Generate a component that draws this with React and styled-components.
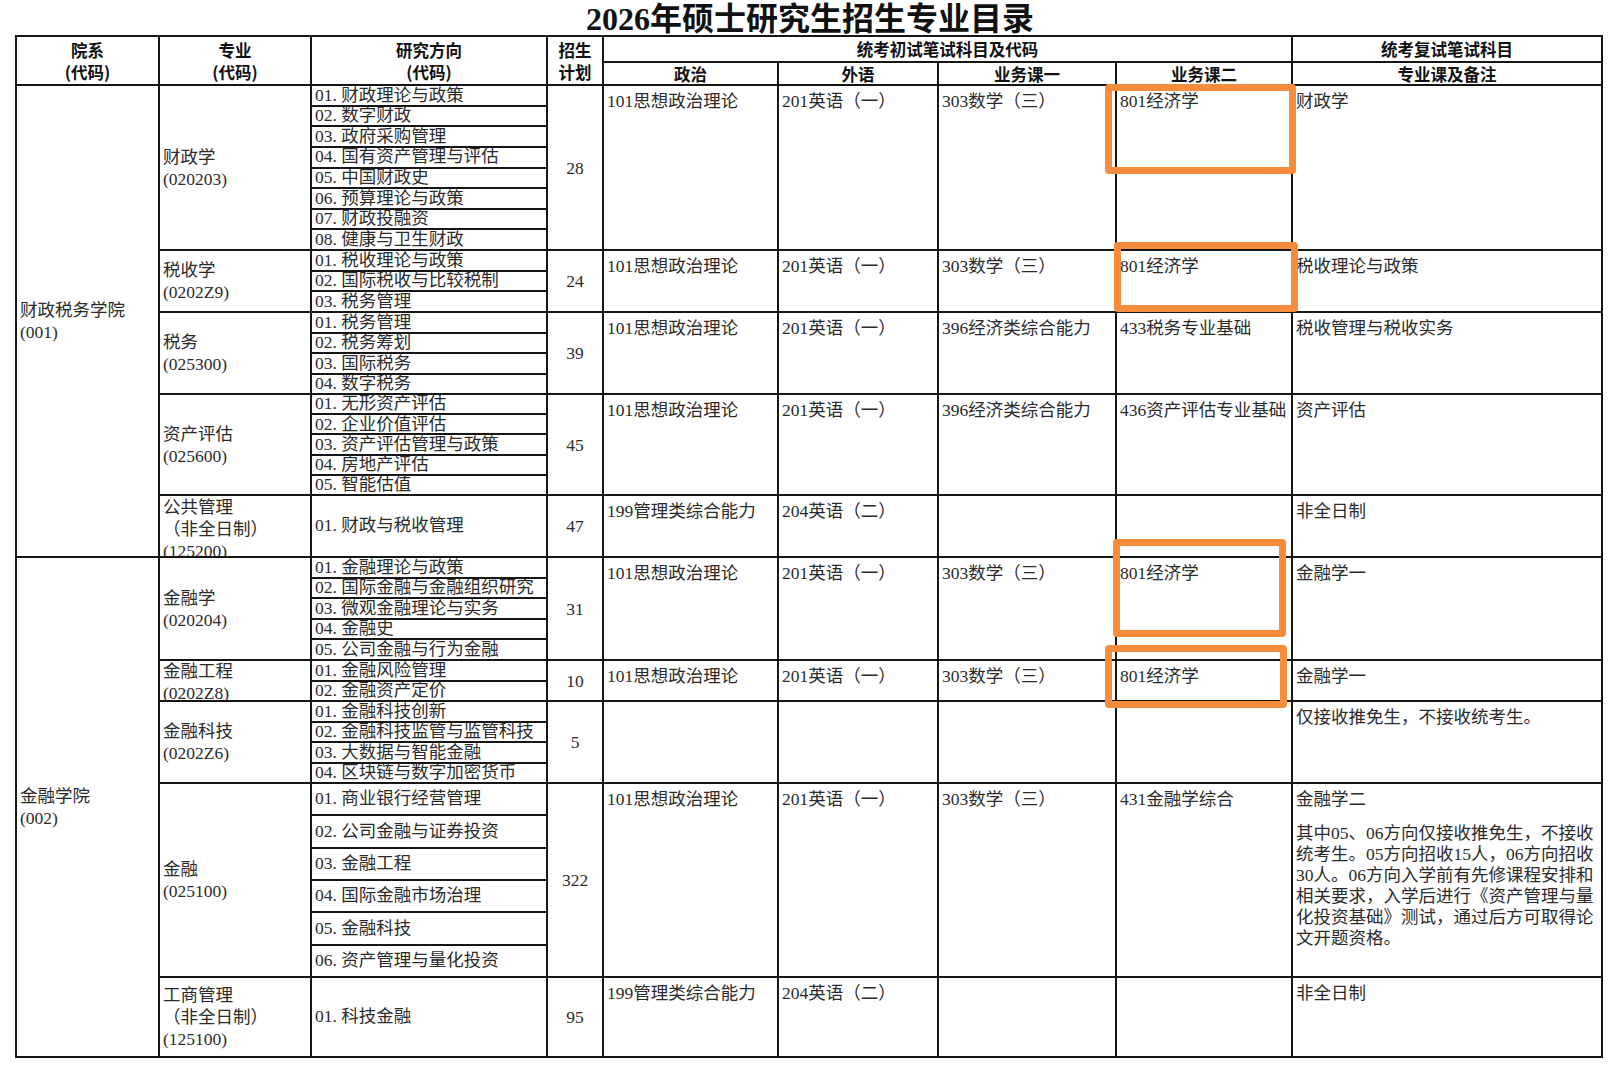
import React from "react";
import styled, { createGlobalStyle } from "styled-components";

const GlobalStyle = createGlobalStyle`
  html, body {
    margin: 0;
    padding: 0;
    background: #fff;
  }
  body {
    font-family: "Liberation Serif", "Noto Sans CJK SC", serif;
    color: #2b2b2b;
  }
`;

const COLS = [143, 152, 236, 56, 175, 160, 178, 176, 310];
const ROWS = [26, 23, 165, 62, 82, 101, 62, 103, 41, 82, 194, 80];
const LINE = "#161616";

const std = ["101思想政治理论", "201英语（一）", "303数学（三）", "801经济学"];

const departments = [
  {
    name: "财政税务学院",
    code: "(001)",
    majors: [
      {
        name: ["财政学", "(020203)"],
        dirs: [
          "01. 财政理论与政策",
          "02. 数字财政",
          "03. 政府采购管理",
          "04. 国有资产管理与评估",
          "05. 中国财政史",
          "06. 预算理论与政策",
          "07. 财政投融资",
          "08. 健康与卫生财政",
        ],
        plan: 28,
        subjects: std,
        remark: "财政学",
      },
      {
        name: ["税收学", "(0202Z9)"],
        dirs: ["01. 税收理论与政策", "02. 国际税收与比较税制", "03. 税务管理"],
        plan: 24,
        subjects: std,
        remark: "税收理论与政策",
      },
      {
        name: ["税务", "(025300)"],
        dirs: ["01. 税务管理", "02. 税务筹划", "03. 国际税务", "04. 数字税务"],
        plan: 39,
        subjects: ["101思想政治理论", "201英语（一）", "396经济类综合能力", "433税务专业基础"],
        remark: "税收管理与税收实务",
      },
      {
        name: ["资产评估", "(025600)"],
        dirs: [
          "01. 无形资产评估",
          "02. 企业价值评估",
          "03. 资产评估管理与政策",
          "04. 房地产评估",
          "05. 智能估值",
        ],
        plan: 45,
        subjects: ["101思想政治理论", "201英语（一）", "396经济类综合能力", "436资产评估专业基础"],
        remark: "资产评估",
      },
      {
        name: ["公共管理", "（非全日制）", "(125200)"],
        dirs: ["01. 财政与税收管理"],
        plan: 47,
        subjects: ["199管理类综合能力", "204英语（二）", "", ""],
        remark: "非全日制",
        shift: 5,
      },
    ],
  },
  {
    name: "金融学院",
    code: "(002)",
    majors: [
      {
        name: ["金融学", "(020204)"],
        dirs: [
          "01. 金融理论与政策",
          "02. 国际金融与金融组织研究",
          "03. 微观金融理论与实务",
          "04. 金融史",
          "05. 公司金融与行为金融",
        ],
        plan: 31,
        subjects: std,
        remark: "金融学一",
      },
      {
        name: ["金融工程", "(0202Z8)"],
        dirs: ["01. 金融风险管理", "02. 金融资产定价"],
        plan: 10,
        subjects: std,
        remark: "金融学一",
        shift: 2,
      },
      {
        name: ["金融科技", "(0202Z6)"],
        dirs: [
          "01. 金融科技创新",
          "02. 金融科技监管与监管科技",
          "03. 大数据与智能金融",
          "04. 区块链与数字加密货币",
        ],
        plan: 5,
        subjects: ["", "", "", ""],
        remark: "仅接收推免生，不接收统考生。",
      },
      {
        name: ["金融", "(025100)"],
        dirs: [
          "01. 商业银行经营管理",
          "02. 公司金融与证券投资",
          "03. 金融工程",
          "04. 国际金融市场治理",
          "05. 金融科技",
          "06. 资产管理与量化投资",
        ],
        plan: 322,
        subjects: ["101思想政治理论", "201英语（一）", "303数学（三）", "431金融学综合"],
        remark: "金融学二",
        note: [
          "其中05、06方向仅接收推免生，不接收",
          "统考生。05方向招收15人，06方向招收",
          "30人。06方向入学前有先修课程安排和",
          "相关要求，入学后进行《资产管理与量",
          "化投资基础》测试，通过后方可取得论",
          "文开题资格。",
        ],
      },
      {
        name: ["工商管理", "（非全日制）", "(125100)"],
        dirs: ["01. 科技金融"],
        plan: 95,
        subjects: ["199管理类综合能力", "204英语（二）", "", ""],
        remark: "非全日制",
      },
    ],
  },
];

// orange highlight boxes drawn over the 业务课二 column
const marks = [
  { left: 1088, top: 47, width: 191, height: 90 },
  { left: 1097, top: 205, width: 184, height: 70 },
  { left: 1096, top: 502, width: 173, height: 98 },
  { left: 1088, top: 608, width: 182, height: 63 },
];

const Sheet = styled.div`
  width: 1620px;
  padding-left: 15px;
  box-sizing: border-box;
`;

const Title = styled.h1`
  margin: 0;
  width: 1590px;
  height: 35px;
  line-height: 38px;
  text-align: center;
  font-size: 32px;
  font-weight: 700;
  color: #111;
  font-family: "Liberation Serif", "Noto Sans CJK SC", serif;
  overflow: visible;
`;

const Grid = styled.div`
  position: relative;
  display: grid;
  grid-template-columns: ${COLS.map((c) => c + "px").join(" ")};
  grid-template-rows: ${ROWS.map((r) => r + "px").join(" ")};
  width: max-content;
  border-top: 2px solid ${LINE};
  border-left: 2px solid ${LINE};
`;

const Cell = styled.div`
  grid-column: ${(p) => p.$col} / span ${(p) => p.$colSpan || 1};
  grid-row: ${(p) => p.$row} / span ${(p) => p.$rowSpan || 1};
  box-sizing: border-box;
  border-right: 2px solid ${LINE};
  border-bottom: 2px solid ${LINE};
  min-width: 0;
  min-height: 0;
  overflow: hidden;
  font-size: 17.5px;
  line-height: 22px;
`;

const HeadCell = styled(Cell)`
  display: flex;
  flex-direction: column;
  align-items: center;
  justify-content: center;
  font-family: "Noto Sans CJK SC", sans-serif;
  font-weight: 700;
  font-size: 16.5px;
  color: #111;
`;

const LabelCell = styled(Cell)`
  display: flex;
  flex-direction: column;
  justify-content: center;
  padding: ${(p) => p.$shift || 0}px 0 0 3px;
  white-space: nowrap;
`;

const PlanCell = styled(Cell)`
  display: flex;
  align-items: center;
  justify-content: center;
`;

const TextCell = styled(Cell)`
  padding: 4px 0 0 3px;
  white-space: nowrap;
`;

const DirList = styled(Cell)`
  display: flex;
  flex-direction: column;
`;

const Dir = styled.div`
  flex: 1 1 0;
  min-height: 0;
  display: flex;
  align-items: center;
  padding-left: 3px;
  white-space: nowrap;
  overflow: visible;
  line-height: 1;
  border-bottom: 2px solid ${LINE};
  &:last-child {
    border-bottom: none;
  }
`;

const Note = styled.div`
  margin-top: 13px;
  width: 296px;
  line-height: 21px;
  white-space: nowrap;
`;

const NoteLine = styled.div`
  text-align: justify;
  text-align-last: ${(p) => (p.$last ? "left" : "justify")};
`;

const Mark = styled.div`
  position: absolute;
  box-sizing: border-box;
  border: 7px solid #f68c3c;
  border-radius: 4px;
  pointer-events: none;
`;

function Lines({ items }) {
  return items.map((t, i) => <div key={i}>{t}</div>);
}

export default function App() {
  let row = 3;
  const body = [];

  departments.forEach((dept, di) => {
    body.push(
      <LabelCell key={"d" + di} $col={1} $row={row} $rowSpan={dept.majors.length}>
        <div>{dept.name}</div>
        <div>{dept.code}</div>
      </LabelCell>
    );
    dept.majors.forEach((m, mi) => {
      const k = `${di}-${mi}`;
      body.push(
        <LabelCell key={"n" + k} $col={2} $row={row} $shift={m.shift}>
          <Lines items={m.name} />
        </LabelCell>,
        <DirList key={"r" + k} $col={3} $row={row}>
          {m.dirs.map((d) => (
            <Dir key={d}>{d}</Dir>
          ))}
        </DirList>,
        <PlanCell key={"p" + k} $col={4} $row={row}>
          {m.plan}
        </PlanCell>
      );
      m.subjects.forEach((s, si) => {
        body.push(
          <TextCell key={`s${k}-${si}`} $col={5 + si} $row={row}>
            {s}
          </TextCell>
        );
      });
      body.push(
        <TextCell key={"m" + k} $col={9} $row={row}>
          <div>{m.remark}</div>
          {m.note && (
            <Note>
              {m.note.map((l, li) => (
                <NoteLine key={li} $last={li === m.note.length - 1}>
                  {l}
                </NoteLine>
              ))}
            </Note>
          )}
        </TextCell>
      );
      row += 1;
    });
  });

  return (
    <>
      <GlobalStyle />
      <Sheet>
        <Title>2026年硕士研究生招生专业目录</Title>
        <Grid>
          <HeadCell $col={1} $row={1} $rowSpan={2}>
            <div>院系</div>
            <div>(代码)</div>
          </HeadCell>
          <HeadCell $col={2} $row={1} $rowSpan={2}>
            <div>专业</div>
            <div>(代码)</div>
          </HeadCell>
          <HeadCell $col={3} $row={1} $rowSpan={2}>
            <div>研究方向</div>
            <div>(代码)</div>
          </HeadCell>
          <HeadCell $col={4} $row={1} $rowSpan={2}>
            <div>招生</div>
            <div>计划</div>
          </HeadCell>
          <HeadCell $col={5} $row={1} $colSpan={4}>
            统考初试笔试科目及代码
          </HeadCell>
          <HeadCell $col={9} $row={1}>
            统考复试笔试科目
          </HeadCell>
          <HeadCell $col={5} $row={2}>政治</HeadCell>
          <HeadCell $col={6} $row={2}>外语</HeadCell>
          <HeadCell $col={7} $row={2}>业务课一</HeadCell>
          <HeadCell $col={8} $row={2}>业务课二</HeadCell>
          <HeadCell $col={9} $row={2}>专业课及备注</HeadCell>
          {body}
          {marks.map((m, i) => (
            <Mark
              key={i}
              style={{ left: m.left, top: m.top, width: m.width, height: m.height }}
            />
          ))}
        </Grid>
      </Sheet>
    </>
  );
}
